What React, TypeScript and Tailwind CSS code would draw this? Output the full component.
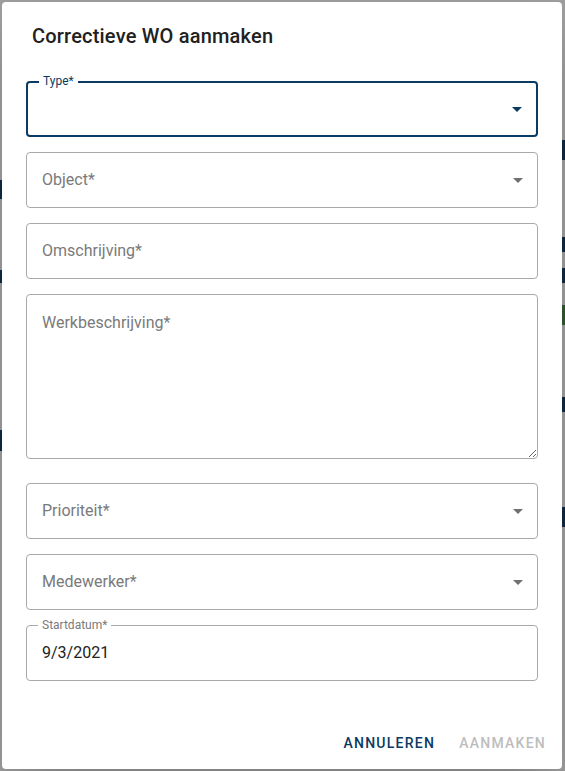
const primary = '#0b3a62'

function Arrow({ color }: { color: string }) {
  return (
    <svg viewBox="0 0 24 24" className="absolute right-[7px] top-1/2 h-6 w-6 -translate-y-1/2" fill={color}>
      <path d="M7 10l5 5 5-5z" />
    </svg>
  )
}

function SelectField({ label }: { label: string }) {
  return (
    <div className="relative flex h-[56px] items-center rounded-[4px] border border-[#a9a9a9] px-[15px]">
      <span className="text-[16px] text-[#7a7a7a]">{label}</span>
      <Arrow color="#6f6f6f" />
    </div>
  )
}

function TextField({ label }: { label: string }) {
  return (
    <div className="relative flex h-[56px] items-center rounded-[4px] border border-[#a9a9a9] px-[15px]">
      <span className="text-[16px] text-[#7a7a7a]">{label}</span>
    </div>
  )
}

export default function App() {
  return (
    <div className="relative h-[771px] w-full overflow-hidden bg-[#9e9e9e] p-[2px]" style={{ fontFamily: 'Roboto, "Liberation Sans", sans-serif' }}>
      {/* page behind the backdrop, only slivers show */}
      <div className="absolute left-0 top-[180px] h-[19px] w-[3px] bg-[#0c2a44]" />
      <div className="absolute left-0 top-[270px] h-[13px] w-[3px] bg-[#0c2a44]" />
      <div className="absolute left-0 top-[430px] h-[21px] w-[3px] bg-[#0c2a44]" />
      <div className="absolute right-0 top-[140px] h-[20px] w-[3px] bg-[#0c2a44]" />
      <div className="absolute right-0 top-[237px] h-[15px] w-[3px] bg-[#0c2a44]" />
      <div className="absolute right-0 top-[268px] h-[15px] w-[3px] bg-[#0c2a44]" />
      <div className="absolute right-0 top-[305px] h-[20px] w-[3px] bg-[#2f5a2c]" />
      <div className="absolute right-0 top-[397px] h-[15px] w-[3px] bg-[#0c2a44]" />
      <div className="absolute right-0 top-[507px] h-[20px] w-[3px] bg-[#0c2a44]" />

      <div className="relative z-10 flex h-[767px] w-[560px] flex-col rounded-[4px] bg-white shadow-2xl">
        <h2 className="pl-[30px] pt-[18px] text-[20px] font-medium leading-[32px] tracking-[0.2px] text-[#212121]">
          Correctieve WO aanmaken
        </h2>

        <div className="mt-[29px] flex flex-col px-[24px]">
          <div className="relative h-[56px] rounded-[4px] border-2" style={{ borderColor: primary }}>
            <span className="absolute left-[11px] top-[-2px] -translate-y-1/2 bg-white px-[4px] text-[12px] leading-[12px]" style={{ color: primary }}>
              Type*
            </span>
            <Arrow color={primary} />
          </div>

          <div className="mt-[15px]">
            <SelectField label="Object*" />
          </div>
          <div className="mt-[15px]">
            <TextField label="Omschrijving*" />
          </div>
          <textarea
            placeholder="Werkbeschrijving*"
            className="mt-[15px] block h-[165px] w-full resize-y rounded-[4px] border border-[#a9a9a9] px-[15px] py-[16px] text-[16px] leading-[23px] text-[#212121] outline-none placeholder:text-[#7a7a7a]"
          />
          <div className="mt-[24px]">
            <SelectField label="Prioriteit*" />
          </div>
          <div className="mt-[15px]">
            <SelectField label="Medewerker*" />
          </div>
          <div className="relative mt-[15px] flex h-[56px] items-center rounded-[4px] border border-[#a9a9a9] px-[15px]">
            <span className="absolute left-[11px] top-[-1px] -translate-y-1/2 bg-white px-[4px] text-[12px] leading-[12px] text-[#7a7a7a]">
              Startdatum*
            </span>
            <span className="text-[16px] text-[#212121]">9/3/2021</span>
          </div>
        </div>

        <div className="mt-auto flex justify-end gap-[8px] p-[8px]">
          <button className="h-[36px] min-w-[64px] rounded-[4px] px-[8px] text-[14px] font-medium uppercase tracking-[1.25px]" style={{ color: primary }}>
            Annuleren
          </button>
          <button disabled className="h-[36px] min-w-[64px] rounded-[4px] px-[8px] text-[14px] font-medium uppercase tracking-[1.25px] text-[#bdbdbd]">
            Aanmaken
          </button>
        </div>
      </div>
    </div>
  )
}
